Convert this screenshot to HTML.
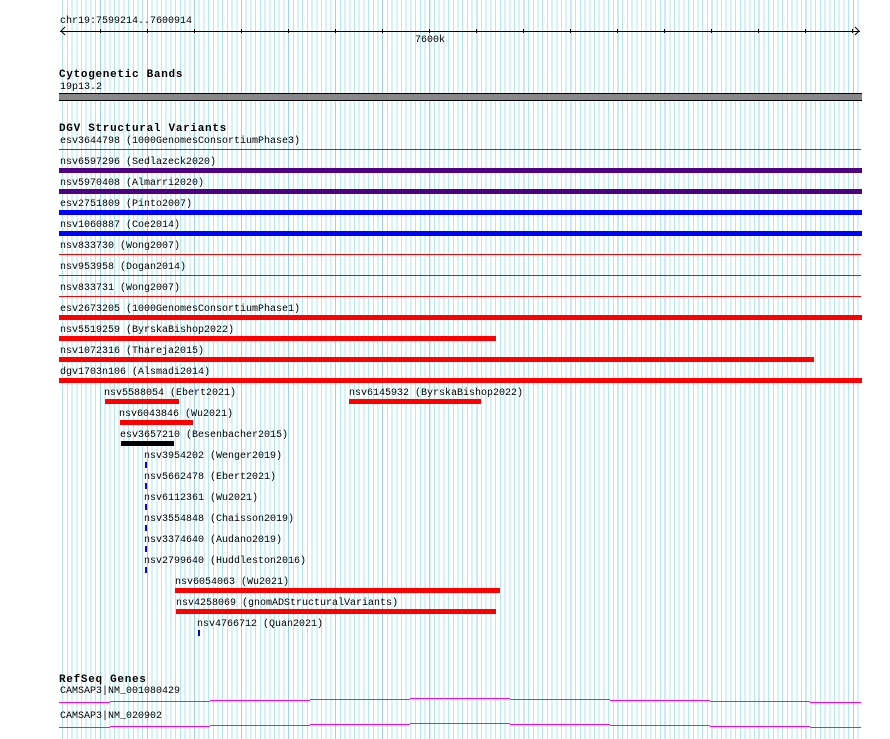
<!DOCTYPE html>
<html><head><meta charset="utf-8"><style>
html,body{margin:0;padding:0;background:#fff;width:890px;height:739px;overflow:hidden;position:relative}
.g{position:absolute;left:59px;top:0;width:802px;height:739px;
background:
repeating-linear-gradient(90deg,transparent 0 40.8px,#9ad2f2 40.8px 41.8px,transparent 41.8px 47.06px),
repeating-linear-gradient(90deg,transparent 0 3.2px,#aeeaf0 3.2px 4.2px,transparent 4.2px 4.706px);}
.t{position:absolute;font-family:"Liberation Mono",monospace;font-size:10px;line-height:10px;color:#000;white-space:pre;margin-top:1px}
.b{font-weight:bold;letter-spacing:0.7px;font-size:11px}
.r{position:absolute;height:5px}
.l{position:absolute;height:1px;background:#f00;left:59px;width:802px}
.m{position:absolute;height:1px;background:#f0f}
</style></head><body>
<div class="g"></div>
<div class="t" style="left:60px;top:16px">chr19:7599214..7600914</div>
<div style="position:absolute;left:60px;top:31px;width:800px;height:1px;background:#000"></div>
<svg style="position:absolute;left:0;top:0" width="890" height="40">
<path d="M65 27 L61 31 L65 35 M855 27 L859 31 L855 35" stroke="#000" fill="none" stroke-width="1"/>
<path d="M100.5 29v4M147.5 29v4M194.5 29v4M241.5 29v4M288.5 29v4M335.5 29v4M382.5 29v4M429.5 29v4M476.5 29v4M523.5 29v4M570.5 29v4M617.5 29v4M664.5 29v4M711.5 29v4M758.5 29v4M805.5 29v4M852.5 29v4" stroke="#000"/>
</svg>
<div class="t" style="left:415px;top:35px">7600k</div>
<div class="t b" style="left:59px;top:69px">Cytogenetic Bands</div>
<div class="t" style="left:60px;top:82px">19p13.2</div>
<div style="position:absolute;left:59px;top:93px;width:803px;height:6px;background:#888;border-top:1px solid #000;border-bottom:1px solid #000"></div>
<div class="t b" style="left:59px;top:123px">DGV Structural Variants</div>
<div class="t" style="left:60px;top:136px">esv3644798 (1000GenomesConsortiumPhase3)</div>
<div class="l" style="top:149px"></div>
<div class="t" style="left:60px;top:157px">nsv6597296 (Sedlazeck2020)</div>
<div class="r" style="left:59px;width:803px;top:168px;background:#500082"></div>
<div class="t" style="left:60px;top:178px">nsv5970408 (Almarri2020)</div>
<div class="r" style="left:59px;width:803px;top:189px;background:#500082"></div>
<div class="t" style="left:60px;top:199px">esv2751809 (Pinto2007)</div>
<div class="r" style="left:59px;width:803px;top:210px;background:#0000ff"></div>
<div class="t" style="left:60px;top:220px">nsv1060887 (Coe2014)</div>
<div class="r" style="left:59px;width:803px;top:231px;background:#0000ff"></div>
<div class="t" style="left:60px;top:241px">nsv833730 (Wong2007)</div>
<div class="l" style="top:254px"></div>
<div class="t" style="left:60px;top:262px">nsv953958 (Dogan2014)</div>
<div class="l" style="top:275px"></div>
<div class="t" style="left:60px;top:283px">nsv833731 (Wong2007)</div>
<div class="l" style="top:296px"></div>
<div class="t" style="left:60px;top:304px">esv2673205 (1000GenomesConsortiumPhase1)</div>
<div class="r" style="left:59px;width:803px;top:315px;background:#f00"></div>
<div class="t" style="left:60px;top:325px">nsv5519259 (ByrskaBishop2022)</div>
<div class="r" style="left:59px;width:437px;top:336px;background:#f00"></div>
<div class="t" style="left:60px;top:346px">nsv1072316 (Thareja2015)</div>
<div class="r" style="left:59px;width:755px;top:357px;background:#f00"></div>
<div class="t" style="left:60px;top:367px">dgv1703n106 (Alsmadi2014)</div>
<div class="r" style="left:59px;width:803px;top:378px;background:#f00"></div>
<div class="t" style="left:104px;top:388px">nsv5588054 (Ebert2021)</div>
<div class="r" style="left:105px;width:74px;top:399px;background:#f00"></div>
<div class="t" style="left:349px;top:388px">nsv6145932 (ByrskaBishop2022)</div>
<div class="r" style="left:349px;width:132px;top:399px;background:#f00"></div>
<div class="t" style="left:119px;top:409px">nsv6043846 (Wu2021)</div>
<div class="r" style="left:120px;width:73px;top:420px;background:#f00"></div>
<div class="t" style="left:120px;top:430px">esv3657210 (Besenbacher2015)</div>
<div class="r" style="left:121px;width:53px;top:441px;background:#000"></div>
<div class="t" style="left:144px;top:451px">nsv3954202 (Wenger2019)</div>
<div class="r" style="left:145px;width:2px;top:462px;height:6px;background:#00f"></div>
<div class="t" style="left:144px;top:472px">nsv5662478 (Ebert2021)</div>
<div class="r" style="left:145px;width:2px;top:483px;height:6px;background:#00f"></div>
<div class="t" style="left:144px;top:493px">nsv6112361 (Wu2021)</div>
<div class="r" style="left:145px;width:2px;top:504px;height:6px;background:#00f"></div>
<div class="t" style="left:144px;top:514px">nsv3554848 (Chaisson2019)</div>
<div class="r" style="left:145px;width:2px;top:525px;height:6px;background:#00f"></div>
<div class="t" style="left:144px;top:535px">nsv3374640 (Audano2019)</div>
<div class="r" style="left:145px;width:2px;top:546px;height:6px;background:#00f"></div>
<div class="t" style="left:144px;top:556px">nsv2799640 (Huddleston2016)</div>
<div class="r" style="left:145px;width:2px;top:567px;height:6px;background:#00f"></div>
<div class="t" style="left:175px;top:577px">nsv6054063 (Wu2021)</div>
<div class="r" style="left:175px;width:325px;top:588px;background:#f00"></div>
<div class="t" style="left:176px;top:598px">nsv4258069 (gnomADStructuralVariants)</div>
<div class="r" style="left:176px;width:320px;top:609px;background:#f00"></div>
<div class="t" style="left:197px;top:619px">nsv4766712 (Quan2021)</div>
<div class="r" style="left:198px;width:2px;top:630px;height:6px;background:#00f"></div>
<div class="t b" style="left:59px;top:674px">RefSeq Genes</div>
<div class="t" style="left:60px;top:686px">CAMSAP3|NM_001080429</div>
<div class="t" style="left:60px;top:711px">CAMSAP3|NM_020902</div>
<div class="m" style="left:59px;width:51px;top:702px"></div>
<div class="m" style="left:110px;width:100px;top:701px"></div>
<div class="m" style="left:210px;width:100px;top:700px"></div>
<div class="m" style="left:310px;width:100px;top:699px"></div>
<div class="m" style="left:410px;width:100px;top:698px"></div>
<div class="m" style="left:510px;width:100px;top:699px"></div>
<div class="m" style="left:610px;width:100px;top:700px"></div>
<div class="m" style="left:710px;width:100px;top:701px"></div>
<div class="m" style="left:810px;width:51px;top:702px"></div>
<div class="m" style="left:59px;width:51px;top:727px"></div>
<div class="m" style="left:110px;width:100px;top:726px"></div>
<div class="m" style="left:210px;width:100px;top:725px"></div>
<div class="m" style="left:310px;width:100px;top:724px"></div>
<div class="m" style="left:410px;width:100px;top:723px"></div>
<div class="m" style="left:510px;width:100px;top:724px"></div>
<div class="m" style="left:610px;width:100px;top:725px"></div>
<div class="m" style="left:710px;width:100px;top:726px"></div>
<div class="m" style="left:810px;width:51px;top:727px"></div>
</body></html>
